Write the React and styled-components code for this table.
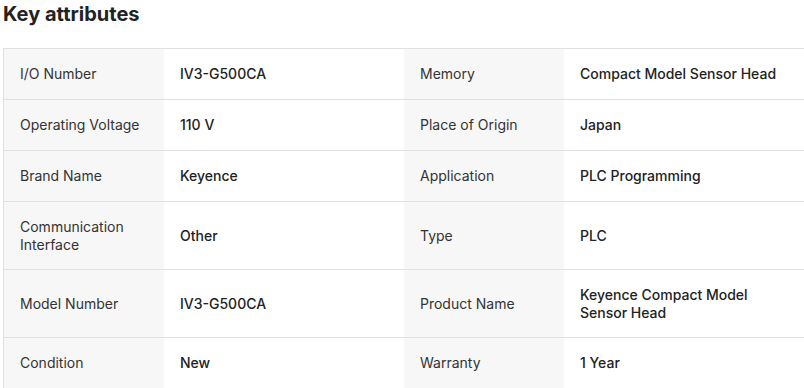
import React from "react";
import styled, { createGlobalStyle } from "styled-components";

const Global = createGlobalStyle`
  html, body { margin: 0; padding: 0; background: #fff; overflow: hidden; }
  body { font-family: Inter, "Noto Sans", sans-serif; }
`;

const Wrap = styled.section`
  padding: 3px 0 0 3px;
`;

const Title = styled.h2`
  margin: 0 0 23px 0;
  font-size: 20px;
  line-height: 22px;
  font-weight: 700;
  color: #222;
`;

const Table = styled.div`
  width: 800px;
  border: 1px solid #e0e0e0;
  border-bottom: none;
  display: grid;
  grid-template-columns: 160px 240px 160px 240px;
`;

const Cell = styled.div`
  box-sizing: border-box;
  min-height: 51px;
  display: flex;
  align-items: center;
  padding: 15.5px 16px;
  font-size: 14px;
  line-height: 18px;
  border-bottom: 1px solid #e0e0e0;
  background: ${(p) => (p.$label ? "#f7f7f7" : "#fff")};
  color: ${(p) => (p.$label ? "#333" : "#222")};
  font-weight: ${(p) => (p.$label ? 400 : 500)};
`;

const rows = [
  ["I/O Number", "IV3-G500CA", "Memory", "Compact Model Sensor Head"],
  ["Operating Voltage", "110 V", "Place of Origin", "Japan"],
  ["Brand Name", "Keyence", "Application", "PLC Programming"],
  ["Communication Interface", "Other", "Type", "PLC"],
  ["Model Number", "IV3-G500CA", "Product Name", "Keyence Compact Model Sensor Head"],
  ["Condition", "New", "Warranty", "1 Year"],
];

export default function App() {
  return (
    <>
      <Global />
      <Wrap>
        <Title>Key attributes</Title>
        <Table>
          {rows.map((r, i) => (
            <React.Fragment key={i}>
              <Cell $label>{r[0]}</Cell>
              <Cell>{r[1]}</Cell>
              <Cell $label>{r[2]}</Cell>
              <Cell>{r[3]}</Cell>
            </React.Fragment>
          ))}
        </Table>
      </Wrap>
    </>
  );
}
